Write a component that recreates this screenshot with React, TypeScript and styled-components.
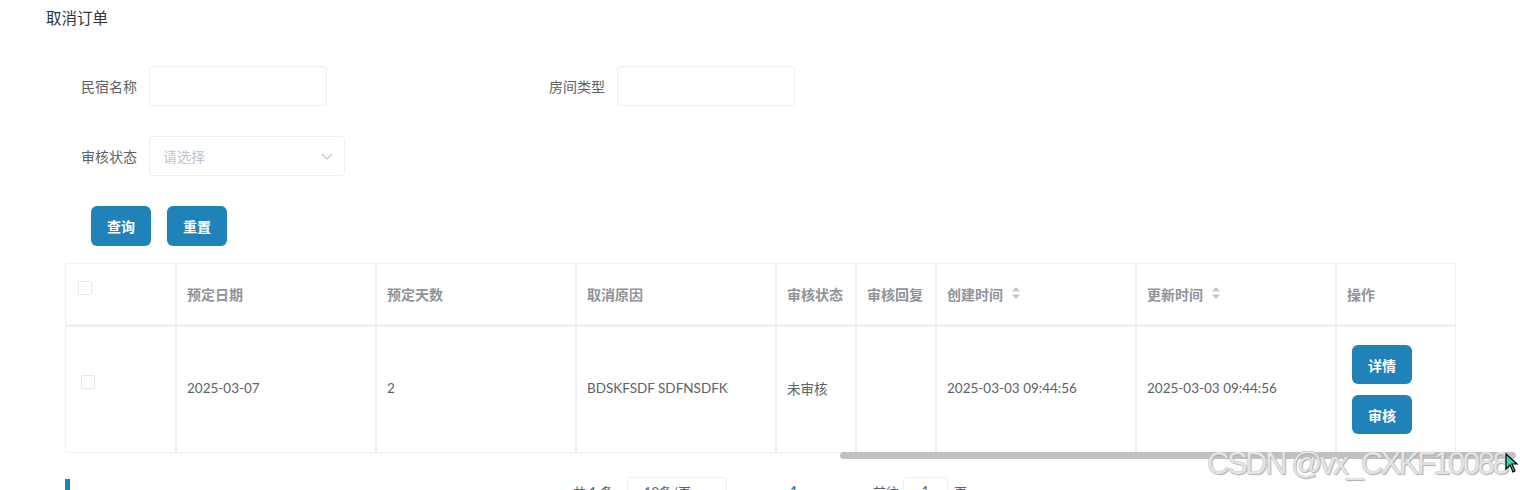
import styled, { createGlobalStyle } from 'styled-components';

const GlobalStyle = createGlobalStyle`
    html, body {
        margin: 0;
        padding: 0;
        background: #fff;
        overflow: hidden;
    }
    body {
        font-family: Lato, "Noto Sans CJK SC", sans-serif;
        color: #606266;
    }
`;

type Row = {
    date: string;
    days: string;
    reason: string;
    status: string;
    reply: string;
    created: string;
    updated: string;
};

const rows: Row[] = [
    {
        date: '2025-03-07',
        days: '2',
        reason: 'BDSKFSDF SDFNSDFK',
        status: '未审核',
        reply: '',
        created: '2025-03-03 09:44:56',
        updated: '2025-03-03 09:44:56',
    },
];

const columns = [
    { title: '预定日期', key: 'date' },
    { title: '预定天数', key: 'days' },
    { title: '取消原因', key: 'reason' },
    { title: '审核状态', key: 'status' },
    { title: '审核回复', key: 'reply' },
    { title: '创建时间', key: 'created', sortable: true },
    { title: '更新时间', key: 'updated', sortable: true },
] as const;

const SortCaret = () => (
    <StyledSort width="10" height="14" viewBox="0 0 10 14">
        <path d="M5 1 L9 5.5 H1 Z" fill="#c0c4cc" />
        <path d="M5 13 L9 8.5 H1 Z" fill="#c0c4cc" />
    </StyledSort>
);

const Chevron = () => (
    <StyledChevron width="14" height="14" viewBox="0 0 14 14">
        <path
            d="M2 5 L7 10 L12 5"
            fill="none"
            stroke="#c0c4cc"
            strokeWidth="1.2"
        />
    </StyledChevron>
);

const Cursor = () => (
    <StyledCursor width="14" height="20" viewBox="0 0 14 20">
        <path
            d="M1 1 L1 16 L5 12 L8 19 L10 18 L7 11 L12 11 Z"
            fill="#3fd1b0"
            stroke="#000"
            strokeWidth="1.2"
        />
    </StyledCursor>
);

const App = () => {
    return (
        <StyledPage>
            <GlobalStyle />
            <StyledTitle>取消订单</StyledTitle>
            <StyledForm>
                <StyledFormItem>
                    <StyledLabel>民宿名称</StyledLabel>
                    <StyledInput />
                </StyledFormItem>
                <StyledFormItem>
                    <StyledLabel>房间类型</StyledLabel>
                    <StyledInput />
                </StyledFormItem>
                <StyledFormItem>
                    <StyledLabel>审核状态</StyledLabel>
                    <StyledSelect>
                        <span>请选择</span>
                        <Chevron />
                    </StyledSelect>
                </StyledFormItem>
            </StyledForm>
            <StyledButtons>
                <StyledButton>查询</StyledButton>
                <StyledButton>重置</StyledButton>
            </StyledButtons>
            <StyledTableWrap>
                <StyledTable>
                    <StyledHeadCell>
                        <StyledCheckbox $head />
                    </StyledHeadCell>
                    {columns.map((col) => (
                        <StyledHeadCell key={col.key}>
                            {col.title}
                            {'sortable' in col && col.sortable && <SortCaret />}
                        </StyledHeadCell>
                    ))}
                    <StyledHeadCell>操作</StyledHeadCell>
                    {rows.map((row, i) => (
                        <StyledRowGroup key={i}>
                            <StyledCell>
                                <StyledCheckbox />
                            </StyledCell>
                            {columns.map((col) => (
                                <StyledCell key={col.key}>
                                    {row[col.key]}
                                </StyledCell>
                            ))}
                            <StyledActionCell>
                                <StyledButton>详情</StyledButton>
                                <StyledButton>审核</StyledButton>
                            </StyledActionCell>
                        </StyledRowGroup>
                    ))}
                </StyledTable>
                <StyledScrollThumb />
                <StyledWatermark>CSDN @vx_CXKF10088</StyledWatermark>
                <Cursor />
            </StyledTableWrap>
            <StyledFooter>
                <StyledBlueMark />
                <StyledPagination>
                    <StyledTotal>共 1 条</StyledTotal>
                    <StyledPageSize>10条/页</StyledPageSize>
                    <StyledPager>
                        <StyledArrow>‹</StyledArrow>
                        <StyledPageNum>1</StyledPageNum>
                        <StyledArrow>›</StyledArrow>
                    </StyledPager>
                    <StyledGoto>前往</StyledGoto>
                    <StyledJump>1</StyledJump>
                    <span>页</span>
                </StyledPagination>
            </StyledFooter>
        </StyledPage>
    );
};

const StyledPage = styled.div`
    padding: 7px 64px 0 46px;
    width: 1520px;
    box-sizing: border-box;
`;

const StyledTitle = styled.div`
    font-size: 15.5px;
    line-height: 22px;
    color: #333;
`;

const StyledForm = styled.div`
    display: grid;
    grid-template-columns: 468px 300px;
    row-gap: 30px;
    margin: 37px 0 0 19px;
`;

const StyledFormItem = styled.div`
    display: flex;
    align-items: center;
`;

const StyledLabel = styled.label`
    width: 84px;
    box-sizing: border-box;
    padding-right: 12px;
    text-align: right;
    font-size: 14px;
    color: #606266;
`;

const StyledInput = styled.div`
    width: 178px;
    height: 40px;
    box-sizing: border-box;
    border: 1px solid #e9eff5;
    border-radius: 4px;
`;

const StyledSelect = styled.div`
    width: 196px;
    height: 40px;
    box-sizing: border-box;
    border: 1px solid #e9eff5;
    border-radius: 4px;
    display: flex;
    align-items: center;
    justify-content: space-between;
    padding: 0 10px 0 13px;
    font-size: 14px;
    color: #c0c4cc;
`;

const StyledChevron = styled.svg`
    display: block;
`;

const StyledButtons = styled.div`
    display: flex;
    gap: 16px;
    margin: 30px 0 0 45px;
`;

const StyledButton = styled.button`
    width: 60px;
    height: 40px;
    border: none;
    border-radius: 6px;
    background: #1f82b8;
    color: #fff;
    font-family: Lato, "Noto Sans CJK SC", sans-serif;
    font-size: 14px;
    font-weight: 700;
    padding: 0;
    cursor: pointer;
`;

const StyledTableWrap = styled.div`
    position: relative;
    margin: 17px 0 0 19px;
    width: 1391px;
`;

const StyledTable = styled.div`
    display: grid;
    grid-template-columns: 109px 198px 198px 198px 78px 78px 198px 198px 118px;
    grid-template-rows: 60px 125px;
    column-gap: 2px;
    row-gap: 3px;
    padding: 1px;
    background: #eef0f3;
    border-radius: 2px;
`;

const StyledRowGroup = styled.div`
    display: contents;
`;

const StyledHeadCell = styled.div`
    background: #fff;
    display: flex;
    align-items: center;
    padding-left: 10px;
    font-size: 14px;
    font-weight: 700;
    color: #909399;
`;

const StyledSort = styled.svg`
    margin-left: 8px;
    margin-top: -2px;
`;

const StyledCell = styled.div`
    background: #fff;
    display: flex;
    align-items: center;
    padding: 0 0 3px 10px;
    font-size: 13.5px;
    color: #606266;
`;

const StyledActionCell = styled.div`
    background: #fff;
    display: flex;
    flex-direction: column;
    justify-content: center;
    gap: 11px;
    padding-left: 15px;

    button {
        height: 39px;
    }
`;

const StyledCheckbox = styled.span<{ $head?: boolean }>`
    width: 12px;
    height: 12px;
    border: 1px solid #e4e7ed;
    border-radius: 2px;
    margin-left: ${(p) => (p.$head ? '2px' : '5px')};
    margin-top: -12px;
`;

const StyledScrollThumb = styled.div`
    position: absolute;
    left: 775px;
    top: 189px;
    width: 676px;
    height: 7px;
    border-radius: 4px;
    background: #c1c1c1;
`;

const StyledWatermark = styled.div`
    position: absolute;
    left: 1142px;
    top: 183px;
    font-family: "Liberation Sans", Arial, sans-serif;
    font-size: 31px;
    letter-spacing: -2.5px;
    color: #e4e4e4;
    white-space: nowrap;
    text-shadow: 0 0 1px #a0a0a0, 1px 1px 1px #b0b0b0;
    pointer-events: none;
`;

const StyledCursor = styled.svg`
    position: absolute;
    left: 1440px;
    top: 190px;
`;

const StyledFooter = styled.div`
    display: flex;
    align-items: flex-start;
    margin: 24px 0 0 19px;
    width: 1391px;
`;

const StyledBlueMark = styled.div`
    width: 5px;
    height: 20px;
    margin-top: 2px;
    background: #1f82b8;
`;

const StyledPagination = styled.div`
    display: flex;
    align-items: center;
    margin-left: 503px;
    font-size: 13px;
    color: #606266;
    height: 28px;
`;

const StyledTotal = styled.span`
    width: 54px;
`;

const StyledPageSize = styled.div`
    width: 100px;
    height: 28px;
    box-sizing: border-box;
    border: 1px solid #e9eff5;
    border-radius: 3px;
    display: flex;
    align-items: center;
    padding-left: 16px;
    margin-right: 13px;
`;

const StyledPager = styled.div`
    display: flex;
    align-items: center;
    margin-right: 25px;
`;

const StyledArrow = styled.span`
    color: #c0c4cc;
    font-size: 16px;
    width: 36px;
    text-align: center;
`;

const StyledPageNum = styled.span`
    color: #1f82b8;
    font-weight: 700;
    width: 36px;
    text-align: center;
`;

const StyledGoto = styled.span`
    margin-right: 4px;
`;

const StyledJump = styled.div`
    width: 45px;
    height: 28px;
    box-sizing: border-box;
    border: 1px solid #e9eff5;
    border-radius: 3px;
    display: flex;
    align-items: center;
    justify-content: center;
    margin-right: 6px;
`;

export default App;
